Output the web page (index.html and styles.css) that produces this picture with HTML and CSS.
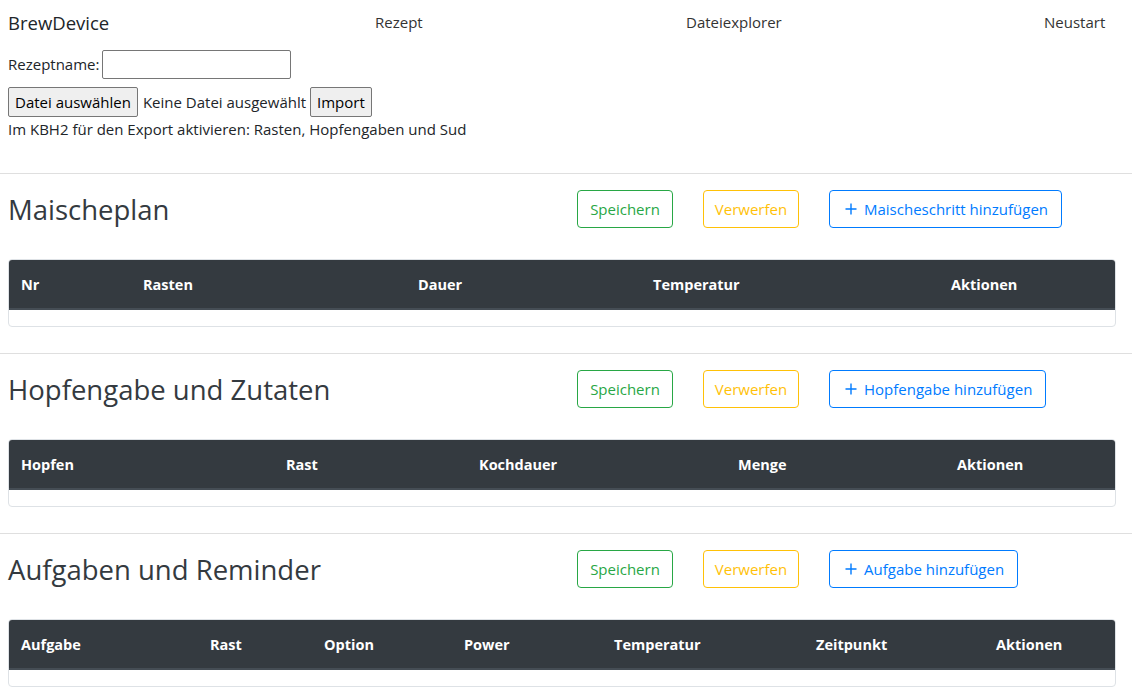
FILE: index.html
```html
<!DOCTYPE html>
<html lang="de">
<head>
<meta charset="utf-8">
<title>BrewDevice</title>
<link rel="stylesheet" href="styles.css">
</head>
<body>
<nav class="nav">
  <span class="brand">BrewDevice</span>
  <span class="nav-link nl-rezept">Rezept</span>
  <span class="nav-link nl-datei">Dateiexplorer</span>
  <span class="nav-link nl-neu">Neustart</span>
</nav>
<div class="top">
  <div class="row-name"><label class="lbl">Rezeptname:</label><input class="txt" type="text"></div>
  <div class="row-file"><button class="sysbtn">Datei auswählen</button><span class="nofile">Keine Datei ausgewählt</span><button class="sysbtn">Import</button></div>
  <div class="hint">Im KBH2 für den Export aktivieren: Rasten, Hopfengaben und Sud</div>
</div>

<hr class="sep sep-first">
<section class="sec">
  <div class="sec-head">
    <h3 class="title">Maischeplan</h3>
    <div class="actions">
      <button class="btn btn-green">Speichern</button>
      <button class="btn btn-yellow">Verwerfen</button>
      <button class="btn btn-blue"><svg class="plus" viewBox="0 0 12 12" width="12" height="12"><path d="M6 0.5v11M0.5 6h11" stroke="currentColor" stroke-width="1.4" fill="none"/></svg>Maischeschritt hinzufügen</button>
    </div>
  </div>
  <div class="tbl-wrap">
    <table class="tbl">
      <thead><tr>
        <th class="c1-1">Nr</th><th class="c1-2">Rasten</th><th class="c1-3">Dauer</th><th class="c1-4">Temperatur</th><th class="c1-5">Aktionen</th>
      </tr></thead>
    </table>
    <div class="tbody-empty"></div>
  </div>
</section>

<hr class="sep">
<section class="sec">
  <div class="sec-head">
    <h3 class="title">Hopfengabe und Zutaten</h3>
    <div class="actions">
      <button class="btn btn-green">Speichern</button>
      <button class="btn btn-yellow">Verwerfen</button>
      <button class="btn btn-blue"><svg class="plus" viewBox="0 0 12 12" width="12" height="12"><path d="M6 0.5v11M0.5 6h11" stroke="currentColor" stroke-width="1.4" fill="none"/></svg>Hopfengabe hinzufügen</button>
    </div>
  </div>
  <div class="tbl-wrap">
    <table class="tbl">
      <thead><tr>
        <th class="c2-1">Hopfen</th><th class="c2-2">Rast</th><th class="c2-3">Kochdauer</th><th class="c2-4">Menge</th><th class="c2-5">Aktionen</th>
      </tr></thead>
    </table>
    <div class="tbody-empty"></div>
  </div>
</section>

<hr class="sep">
<section class="sec">
  <div class="sec-head">
    <h3 class="title">Aufgaben und Reminder</h3>
    <div class="actions">
      <button class="btn btn-green">Speichern</button>
      <button class="btn btn-yellow">Verwerfen</button>
      <button class="btn btn-blue"><svg class="plus" viewBox="0 0 12 12" width="12" height="12"><path d="M6 0.5v11M0.5 6h11" stroke="currentColor" stroke-width="1.4" fill="none"/></svg>Aufgabe hinzufügen</button>
    </div>
  </div>
  <div class="tbl-wrap">
    <table class="tbl">
      <thead><tr>
        <th class="c3-1">Aufgabe</th><th class="c3-2">Rast</th><th class="c3-3">Option</th><th class="c3-4">Power</th><th class="c3-5">Temperatur</th><th class="c3-6">Zeitpunkt</th><th class="c3-7">Aktionen</th>
      </tr></thead>
    </table>
    <div class="tbody-empty"></div>
  </div>
</section>
</body>
</html>
```
FILE: styles.css
```css
* { box-sizing: border-box; }
html, body { margin: 0; padding: 0; background: #fff; }
body {
  font-family: "Open Sans", "Noto Sans", "DejaVu Sans", sans-serif;
  color: #212529;
  width: 1132px;
  overflow: hidden;
}

.nav {
  display: flex;
  align-items: center;
  height: 44px;
  padding: 0 8px;
}
.brand { font-size: 18.5px; width: 367px; }
.nav-link { font-size: 15px; color: #333; }
.nl-rezept { width: 311px; }
.nl-datei { width: 358px; }

.top { padding: 0 8px; font-size: 15px; }
.row-name { display: flex; align-items: center; height: 30px; margin-top: 5px; }
.lbl { margin-right: 3px; }
.txt {
  width: 189px; height: 29px;
  border: 1px solid #767676; border-radius: 2px;
  font: inherit; padding: 2px 4px;
}
.row-file { display: flex; align-items: center; height: 30px; margin-top: 8px; }
.sysbtn {
  height: 30px;
  font: inherit; font-size: 15px; color: #000;
  background: #efefef;
  border: 1px solid #767676; border-radius: 2px;
  padding: 0 6px;
}
.nofile { margin: 0 4px 0 5px; }
.hint { margin-top: 2px; line-height: 20px; }

.sep { border: 0; border-top: 1px solid #dfdfdf; margin: 0; }
.sep-first { margin-top: 34px; }
.sec { padding: 16px 16px 26px 8px; }
.sec-head { display: flex; align-items: center; height: 38px; }
.title {
  margin: 0; width: 569px;
  font-size: 27.5px; font-weight: 500; color: #343a40;
}
.actions { display: flex; gap: 30px; }
.btn {
  height: 38px;
  font: inherit; font-size: 15px;
  background: #fff;
  border: 1px solid; border-radius: 4px;
  padding: 0 12px;
  display: inline-flex; align-items: center;
}
.btn-green { color: #28a745; border-color: #28a745; width: 96px; justify-content: center; }
.btn-yellow { color: #ffc107; border-color: #ffc107; width: 96px; justify-content: center; }
.btn-blue { color: #007bff; border-color: #007bff; padding: 0 13px 0 15px; }
.plus { margin-right: 7px; flex: none; }

.tbl-wrap {
  margin-top: 31px;
  border: 1px solid #dee2e6;
  border-radius: 4px;
  overflow: hidden;
}
.tbl { width: 100%; border-collapse: collapse; table-layout: fixed; }
.tbl th {
  background: #343a40; color: #fff;
  font-size: 14.5px; font-weight: 700;
  text-align: left;
  height: 49px;
  padding: 0 12px;
  border-bottom: 2px solid #454d55;
}
.tbody-empty { height: 16px; }

.c1-1 { width: 122px; } .c1-2 { width: 275px; } .c1-3 { width: 235px; } .c1-4 { width: 298px; } .c1-5 { width: auto; }
.c2-1 { width: 265px; } .c2-2 { width: 193px; } .c2-3 { width: 259px; } .c2-4 { width: 219px; } .c2-5 { width: auto; }
.c3-1 { width: 189px; } .c3-2 { width: 114px; } .c3-3 { width: 140px; } .c3-4 { width: 150px; } .c3-5 { width: 202px; } .c3-6 { width: 180px; } .c3-7 { width: auto; }
```
